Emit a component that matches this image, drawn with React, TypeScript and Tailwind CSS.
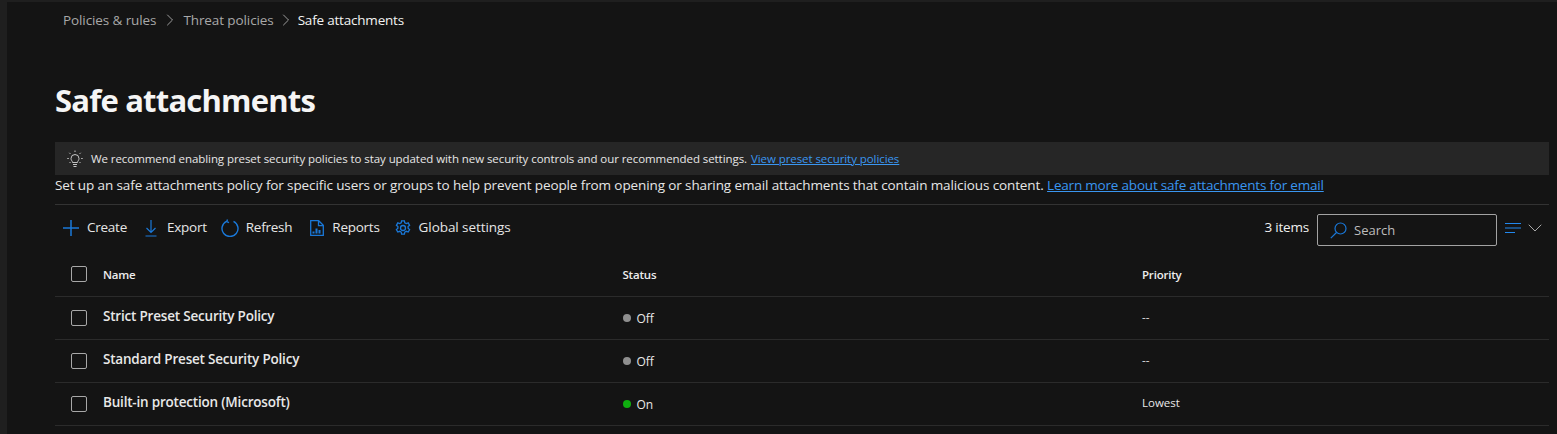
import { ChevronDown, ChevronRight } from "lucide-react"

const font = { fontFamily: '"Open Sans", "Noto Sans", sans-serif' }

const rows = [
    { name: "Strict Preset Security Policy", on: false, priority: "--" },
    { name: "Standard Preset Security Policy", on: false, priority: "--" },
    { name: "Built-in protection (Microsoft)", on: true, priority: "Lowest" },
]

function Checkbox() {
    return <div className="w-4 h-4 shrink-0 rounded-[2px] border border-[#a8a8a8]" />
}

function PlusIcon() {
    return (
        <svg width="18" height="18" viewBox="0 0 18 18" fill="none" stroke="#1a78d8" strokeWidth="1.5">
            <path d="M9 1v16M1 9h16" />
        </svg>
    )
}

function ExportIcon() {
    return (
        <svg width="14" height="18" viewBox="0 0 14 18" fill="none" stroke="#1a78d8" strokeWidth="1.2">
            <path d="M7 1v12M2.500 9 7 13.500 11.500 9M1.500 17h11" />
        </svg>
    )
}

function RefreshIcon() {
    return (
        <svg width="18" height="18" viewBox="0 0 18 18" fill="none" stroke="#1a78d8" strokeWidth="1.4">
            <path d="M5.500 2.300a8 8 0 1 0 7 0M6.500 .5 5.800 2.600 8 3.600" />
        </svg>
    )
}

function ReportsIcon() {
    return (
        <svg width="14" height="16" viewBox="0 0 14 16" fill="none" stroke="#1a78d8" strokeWidth="1.3">
            <path d="M.7.7h8l4.600 4.600v10H.7zM8.500 .7v5h4.800" />
            <path d="M3.500 13.500v-2M6.500 13.500v-5M9.500 13.500v-3.500" strokeWidth="2" />
        </svg>
    )
}

function GearIcon() {
    return (
        <svg width="16" height="16" viewBox="0 0 16 16" fill="none" stroke="#1a78d8" strokeWidth="1.300">
            <circle cx="8" cy="8" r="2.500" />
            <path d="M6.600.8h2.800l.4 2 1.500.8 1.900-.7 1.400 2.400-1.500 1.300v1.700l1.500 1.300-1.400 2.400-1.900-.7-1.500.8-.4 2H6.600l-.4-2-1.500-.8-1.900.7-1.400-2.400 1.500-1.300V6.600L1.400 5.300l1.400-2.400 1.900.7 1.500-.8z" />
        </svg>
    )
}

function BulbIcon() {
    return (
        <svg width="16" height="18" viewBox="0 0 16 18" fill="none" stroke="#d6d6d6" strokeWidth="0.9">
            <path d="M5.500 12.500c0-1.500-1.500-2-1.500-4a4 4 0 0 1 8 0c0 2-1.500 2.500-1.500 4zM6 14.500h4M6.500 16.500h3" />
            <path d="M8 .5v1.500M2.300 2.800l1.100 1.100M13.700 2.800l-1.100 1.100M.3 8.500h1.500M14.200 8.500h1.500M2.500 13l1-1M13.500 13l-1-1" />
        </svg>
    )
}

function SearchIcon() {
    return (
        <svg width="17" height="17" viewBox="0 0 17 17" fill="none" stroke="#1a78d8" strokeWidth="1.2">
            <circle cx="10.500" cy="6.500" r="5.500" />
            <path d="M6.500 10.500.8 16.200" />
        </svg>
    )
}

function ToolButton({ icon, label, spacing, track = "tracking-[-0.25px]" }: { icon: React.ReactNode; label: string; spacing: string; track?: string }) {
    return (
        <div className={`flex items-center ${spacing}`}>
            {icon}
            <span className={`mb-[2px] text-[13.500px] text-[#e6e6e6] ${track}`}>{label}</span>
        </div>
    )
}

export default function App() {
    return (
        <div className="h-[434px] overflow-hidden bg-[#1f1f1f] pl-[7px] pt-[2px]" style={font}>
            <div className="h-full bg-[#141414] pl-[48px] pr-2">
                {/* Breadcrumb */}
                <div className="flex items-center h-9 pl-2 text-[13.500px] tracking-[-0.1px] text-[#a8a8a8]">
                    <span>Policies &amp; rules</span>
                    <ChevronRight className="w-5 h-5 mx-[3.500px]" strokeWidth={1.100} />
                    <span>Threat policies</span>
                    <ChevronRight className="w-5 h-5 mx-[2px]" strokeWidth={1.100} />
                    <span className="text-[#f2f2f2] tracking-[-0.2px]">Safe attachments</span>
                </div>

                <h1 className="mt-[37px] text-[31px] leading-[50px] font-bold tracking-[-0.8px] text-[#f5f5f5]">Safe attachments</h1>

                {/* Banner */}
                <div className="mt-[17px] flex items-center h-[33px] pl-3 gap-[8px] bg-[#262626] text-[11.500px] tracking-[-0.07px] text-[#e6e6e6]">
                    <BulbIcon />
                    <span>
                        We recommend enabling preset security policies to stay updated with new security controls and our recommended settings.{" "}
                        <span className="text-[#3a96f0] underline ml-[1px]">View preset security policies</span>
                    </span>
                </div>

                <div className="h-[30px] border-b border-[#333333] pt-[1px] text-[13.500px] leading-[19px] tracking-[-0.11px] text-[#e6e6e6]">
                    Set up an safe attachments policy for specific users or groups to help prevent people from opening or sharing email attachments that contain malicious content.{" "}
                    <span className="text-[#3a96f0] underline tracking-[-0.2px]">Learn more about safe attachments for email</span>
                </div>

                {/* Toolbar */}
                <div className="flex items-center justify-between h-[46px] pl-[7px]">
                    <div className="flex items-center">
                        <ToolButton icon={<PlusIcon />} label="Create" spacing="gap-[7px]" />
                        <ToolButton icon={<ExportIcon />} label="Export" spacing="gap-[9px] ml-[17px]" />
                        <ToolButton icon={<RefreshIcon />} label="Refresh" spacing="gap-[7px] ml-[14px]" />
                        <ToolButton icon={<ReportsIcon />} label="Reports" spacing="gap-[8px] ml-[18px]" />
                        <ToolButton icon={<GearIcon />} label="Global settings" spacing="gap-[8px] ml-[15px]" track="tracking-[-0.08px]" />
                    </div>
                    <div className="flex items-center">
                        <span className="mr-2 mb-[2px] text-[13.500px] tracking-[-0.2px] text-[#f0f0f0]">3 items</span>
                        <div className="flex items-center w-[180px] h-8 mt-[4px] pl-[12px] gap-[7px] rounded-[2px] border border-[#a3a3a3] text-[13px] text-[#bdbdbd]">
                            <SearchIcon />
                            <span className="mt-[2px]">Search</span>
                        </div>
                        <div className="flex items-center ml-2 mr-[2px]">
                            <svg width="16" height="10" viewBox="0 0 16 10" fill="none" stroke="#2288ee" strokeWidth="1.100">
                                <path d="M0 .5h16M0 5h16M0 9.500h10" />
                            </svg>
                            <ChevronDown className="w-6 h-6 ml-[2px] text-[#a8a8a8]" strokeWidth={1} />
                        </div>
                    </div>
                </div>

                {/* Table */}
                <div className="grid grid-cols-[48px_519.500px_519.500px_1fr] items-center h-[46px] border-b border-[#2b2b2b] text-[11.500px] font-semibold tracking-[-0.2px] text-[#ededed]">
                    <div className="pl-[16px]"><Checkbox /></div>
                    <div className="pt-[3px]">Name</div>
                    <div className="pt-[3px]">Status</div>
                    <div className="pt-[3px]">Priority</div>
                </div>
                {rows.map((row) => (
                    <div key={row.name} className="grid grid-cols-[48px_519.500px_519.500px_1fr] items-center h-[43px] border-b border-[#2b2b2b]">
                        <div className="pl-[16px]"><Checkbox /></div>
                        <div className="text-[13.500px] font-semibold tracking-[-0.2px] text-[#e8e8e8] pb-[3px]">{row.name}</div>
                        <div className="flex items-center gap-[6px] text-[12px] text-[#e8e8e8] pt-[1px]">
                            <span className={`w-2 h-2 mb-[2px] rounded-full ${row.on ? "bg-[#0fae0f]" : "bg-[#8f8f8f]"}`} />
                            {row.on ? "On" : "Off"}
                        </div>
                        <div className="text-[11.500px] text-[#e8e8e8] pb-[3px]">{row.priority}</div>
                    </div>
                ))}
            </div>
        </div>
    )
}
